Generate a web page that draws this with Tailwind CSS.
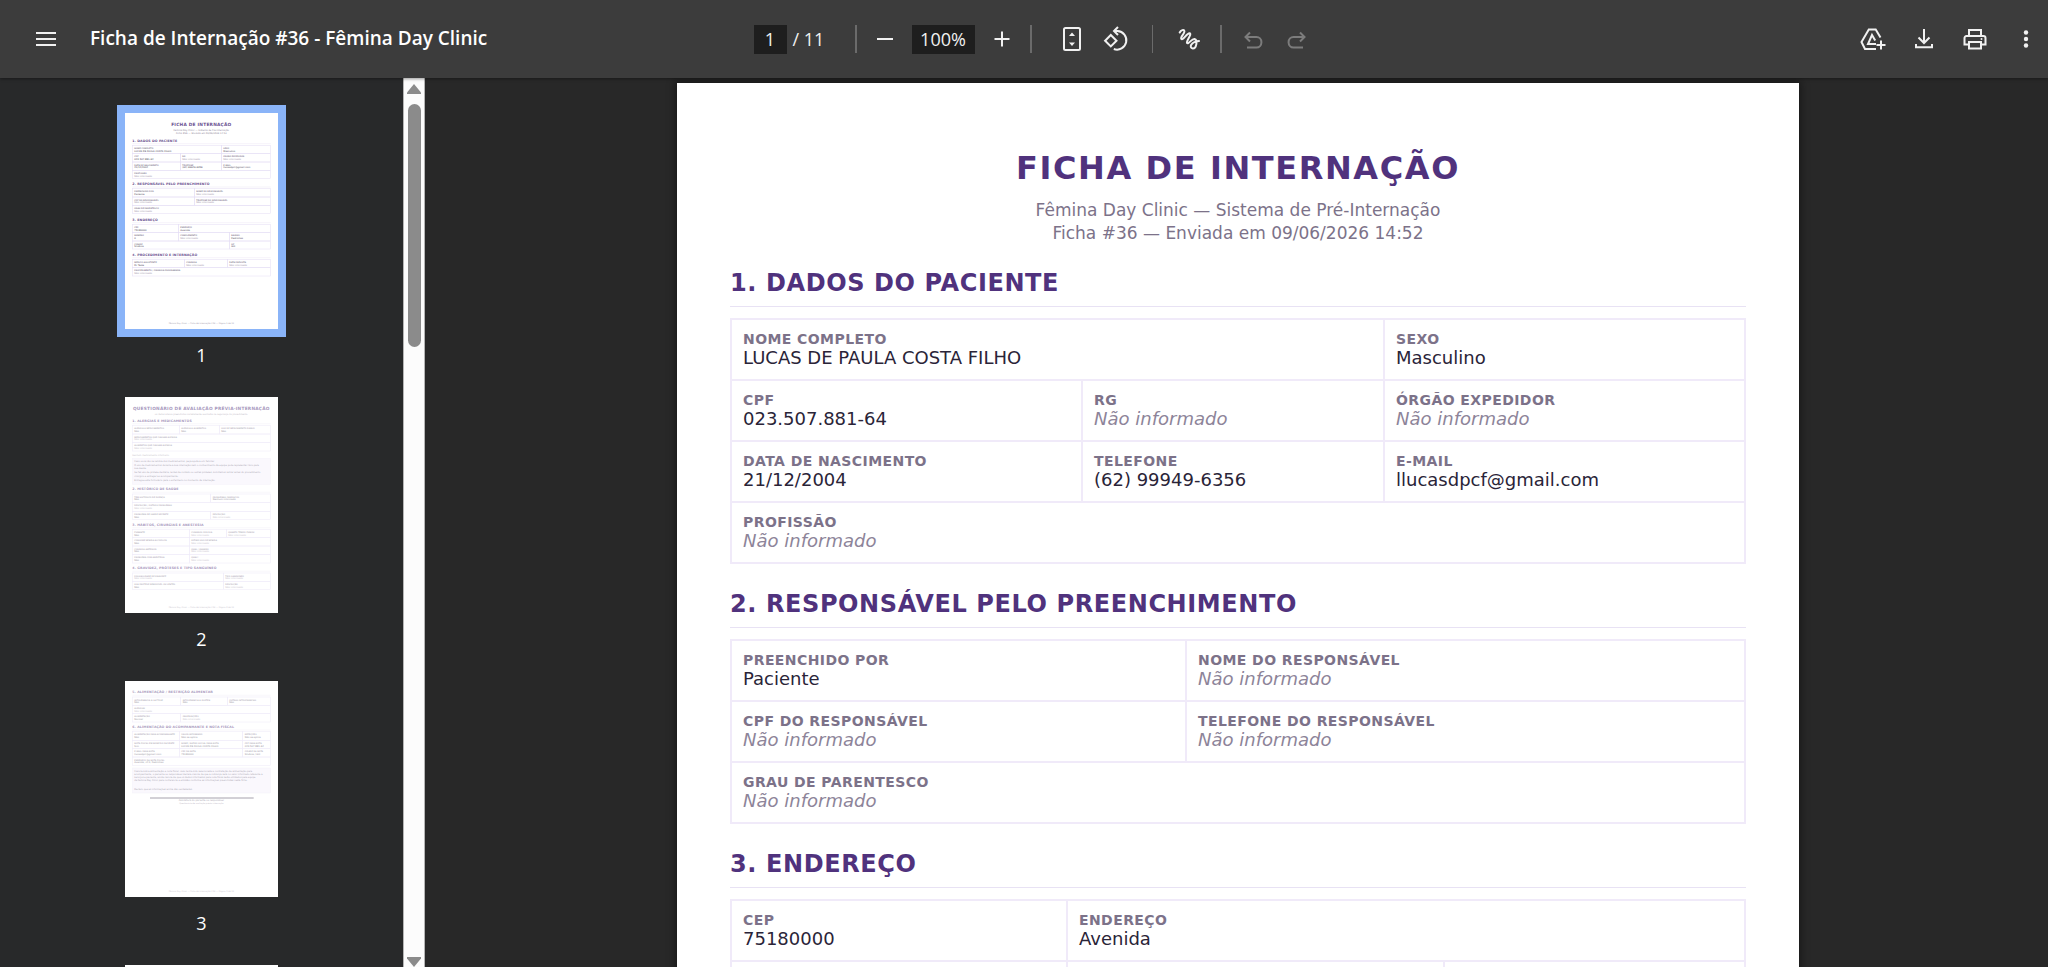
<!DOCTYPE html>
<html lang="pt-BR">
<head>
<meta charset="utf-8">
<meta name="viewport" content="width=device-width, initial-scale=1">
<title>Ficha de Internação #36 - Fêmina Day Clinic</title>
<script src="https://cdn.jsdelivr.net/npm/@tailwindcss/browser@4"></script>
</head>
<body class="flex h-screen flex-col overflow-hidden bg-[#282828] font-['Open_Sans','Noto_Sans',sans-serif] text-white">

<header class="relative z-10 flex h-[78px] shrink-0 items-center bg-[#3c3c3c] text-lg text-[#f1f1f1] shadow-[0_1px_3px_rgba(0,0,0,0.4)]">
  <div class="flex flex-1 items-center gap-[22px] pl-6">
    <button aria-label="Menu" class="flex h-11 w-11 items-center justify-center">
      <svg class="size-7" viewBox="0 0 28 28" stroke="currentColor" stroke-width="2"><path d="M4 8h20M4 14h20M4 20h20"/></svg>
    </button>
    <h1 class="whitespace-nowrap text-[19px] font-semibold text-white">Ficha de Internação #36 - Fêmina Day Clinic</h1>
  </div>

  <div class="flex shrink-0 items-center">
    <input aria-label="Página" value="1" class="h-[29px] w-[33px] bg-[#1e1e1e] text-center">
    <span class="ml-[6px] w-[56px] whitespace-nowrap">/ 11</span>
    <span class="mx-[6px] h-7 w-[2px] bg-[#6b6b6b]"></span>
    <button aria-label="Reduzir zoom" class="flex h-11 w-11 items-center justify-center">
      <svg class="size-7" viewBox="0 0 28 28" stroke="currentColor" stroke-width="2"><path d="M6 14h16"/></svg>
    </button>
    <input aria-label="Zoom" value="100%" class="mx-[5px] h-[29px] w-[63px] bg-[#1e1e1e] text-center">
    <button aria-label="Aumentar zoom" class="flex h-11 w-11 items-center justify-center">
      <svg class="size-7" viewBox="0 0 28 28" stroke="currentColor" stroke-width="2"><path d="M6.500 14h15M14 6.500v15"/></svg>
    </button>
    <span class="ml-[6px] mr-[18px] h-7 w-[2px] bg-[#6b6b6b]"></span>
    <button aria-label="Ajustar à página" class="flex h-11 w-11 items-center justify-center">
      <svg class="size-7" viewBox="0 0 28 28" fill="none" stroke="currentColor" stroke-width="2"><rect x="6" y="3" width="16" height="22" rx="1.500"/><path d="M14 7.500l3 3.500h-6zM14 21l3-3.500h-6z" fill="currentColor" stroke="none"/></svg>
    </button>
    <button aria-label="Girar no sentido anti-horário" class="flex h-11 w-11 items-center justify-center">
      <svg class="size-7" viewBox="0 0 28 28" fill="none" stroke="currentColor" stroke-width="2"><path d="M8.800 10l5.700 5.700-5.700 5.700-5.700-5.700zM11.500 6H15.500a9.300 9.300 0 1 1-3.700 18M16 2l-4 4 4 4"/></svg>
    </button>
    <span class="mx-[14px] h-7 w-px bg-[#6b6b6b]"></span>
    <button aria-label="Desenhar" class="flex h-11 w-11 items-center justify-center">
      <svg class="size-7" viewBox="0 0 28 28" fill="none" stroke="currentColor" stroke-width="2" stroke-linecap="round"><path d="M4.700 7.500C5.800 5.200 9.200 3.800 9.400 6.500 9.400 9 5 12 6.300 13.800 8 15.700 11.500 8.500 14.500 8.300 17.500 8.600 11 16 12 18 13.200 19.800 16.500 13.800 19.500 14 23 14.800 21.500 23.600 17.800 23.500 13.800 23 15.500 16.800 24 16"/></svg>
    </button>
    <span class="mx-[9px] h-7 w-[2px] bg-[#6b6b6b]"></span>
    <button aria-label="Desfazer" disabled class="flex h-11 w-11 items-center justify-center text-[#7c7c7c]">
      <svg class="size-7" viewBox="0 0 28 28" fill="none" stroke="currentColor" stroke-width="2"><path d="M6.500 12H17.500a4.700 5 0 0 1 0 10.500H8M11 7.500L6.500 12l4.500 4.500"/></svg>
    </button>
    <button aria-label="Refazer" disabled class="flex h-11 w-11 items-center justify-center text-[#7c7c7c]">
      <svg class="size-7" viewBox="0 0 28 28" fill="none" stroke="currentColor" stroke-width="2"><path d="M21.500 12H10.500a4.700 5 0 0 0 0 10.500H20M17 7.500L21.500 12l-4.500 4.500"/></svg>
    </button>
  </div>

  <div class="flex flex-1 items-center justify-end gap-[7px]">
    <button aria-label="Salvar no Google Drive" class="flex h-11 w-11 items-center justify-center">
      <svg class="size-7" viewBox="0 0 28 28" fill="none" stroke="currentColor" stroke-width="2"><path d="M21.500 12.500L16.700 4.500H9.800L2.500 17l3.500 7h11M17 19H9l4-9 3.200 5.500M22 15.500v9M17.500 20h9"/></svg>
    </button>
    <button aria-label="Fazer download" class="flex h-11 w-11 items-center justify-center">
      <svg class="size-7" viewBox="0 0 28 28" fill="none" stroke="currentColor" stroke-width="2"><path d="M14 4v14M8.500 12.500l5.500 5.500 5.500-5.500M6 19v3.200h16V19"/></svg>
    </button>
    <button aria-label="Imprimir" class="flex h-11 w-11 items-center justify-center">
      <svg class="size-7" viewBox="0 0 28 28" fill="none" stroke="currentColor" stroke-width="2"><path d="M8 11V5h12v6M8 19.500H3.500V13a2 2 0 0 1 2-2h17a2 2 0 0 1 2 2v6.500H20M8 17h12v6.500H8z"/><circle cx="20.500" cy="14" r="1" fill="currentColor" stroke="none"/></svg>
    </button>
    <button aria-label="Mais ações" class="flex h-11 w-11 items-center justify-center">
      <svg class="size-7" viewBox="0 0 28 28" fill="currentColor"><circle cx="14" cy="7.500" r="2.200"/><circle cx="14" cy="14" r="2.200"/><circle cx="14" cy="20.500" r="2.200"/></svg>
    </button>
  </div>
</header>

<div class="flex min-h-0 flex-1">
  <nav aria-label="Miniaturas" class="flex w-[403px] shrink-0 flex-col items-center gap-4 overflow-hidden bg-[#28292a] pt-[27px] text-lg">
    <a href="#pagina-1" class="flex shrink-0 flex-col items-center"><span class="bg-[#8ab4f8] p-2"><svg id="mini-1" class="block h-[216px] w-[153px] bg-white" viewBox="0 0 459 648"></svg></span><span class="leading-9">1</span></a>
    <a href="#pagina-2" class="flex shrink-0 flex-col items-center"><span class="p-2"><svg id="mini-2" class="block h-[216px] w-[153px] bg-white" viewBox="0 0 459 648"></svg></span><span class="leading-9">2</span></a>
    <a href="#pagina-3" class="flex shrink-0 flex-col items-center"><span class="p-2"><svg id="mini-3" class="block h-[216px] w-[153px] bg-white" viewBox="0 0 459 648"></svg></span><span class="leading-9">3</span></a>
    <a href="#pagina-4" aria-label="Página 4" class="flex shrink-0 flex-col items-center"><span class="p-2"><svg class="block h-[216px] w-[153px] bg-white" viewBox="0 0 459 648"></svg></span></a>
  </nav>

  <div aria-hidden="true" class="flex w-[22px] shrink-0 flex-col items-center justify-between border-x border-[#b5b5b5] bg-[#fcfcfc] pt-[6px]">
    <div class="flex flex-col items-center gap-[10px]">
      <svg class="h-[10px] w-[14px]" viewBox="0 0 14 10" fill="#8b8b8b"><path d="M7 0L14 8.500V10H0V8.500z"/></svg>
      <div class="h-[243px] w-[13px] rounded-full bg-[#8b8b8b]"></div>
    </div>
    <svg class="h-[10px] w-[14px]" viewBox="0 0 14 10" fill="#8b8b8b"><path d="M7 10L14 1.500V0H0V1.500z"/></svg>
  </div>

  <main class="min-w-0 flex-1 overflow-hidden pl-[3px] pt-[5px]">
    <article id="pagina-1" class="mx-auto w-[1122px] bg-white px-[53px] pb-24 pt-[65px] font-['DejaVu_Sans',sans-serif] text-[#2a2438] shadow-[0_0_8px_2px_rgba(0,0,0,0.4)]">
      <h2 class="text-center text-[32px] leading-[40px] font-bold tracking-[0.05em] text-[#50327d]">FICHA DE INTERNAÇÃO</h2>
      <p class="mt-[11px] text-center text-[17px] leading-[23px] text-[#7c7289]">Fêmina Day Clinic — Sistema de Pré-Internação<br>Ficha #36 — Enviada em 09/06/2026 14:52</p>

      <h3 class="mt-[23px] border-b border-[#e8e2f4] pb-2 text-2xl leading-[30px] font-bold tracking-wide text-[#50327d]">1. DADOS DO PACIENTE</h3>
      <table class="mt-[11px] w-full table-fixed border-collapse text-left text-lg leading-5 [&_b]:block [&_b]:text-sm [&_b]:leading-[18px] [&_b]:tracking-[0.03em] [&_b]:text-[#7c7289] [&_i]:text-[#8d8499] [&_td]:h-[61px] [&_td]:border-2 [&_td]:border-[#f0eaf9] [&_td]:px-[11px] [&_td]:pb-[2px]">
        <colgroup><col class="w-[351px]"><col class="w-[302px]"><col></colgroup>
        <tbody>
          <tr><td colspan="2"><b>NOME COMPLETO</b>LUCAS DE PAULA COSTA FILHO</td><td><b>SEXO</b>Masculino</td></tr>
          <tr><td><b>CPF</b>023.507.881-64</td><td><b>RG</b><i>Não informado</i></td><td><b>ÓRGÃO EXPEDIDOR</b><i>Não informado</i></td></tr>
          <tr><td><b>DATA DE NASCIMENTO</b>21/12/2004</td><td><b>TELEFONE</b>(62) 99949-6356</td><td><b>E-MAIL</b>llucasdpcf@gmail.com</td></tr>
          <tr><td colspan="3"><b>PROFISSÃO</b><i>Não informado</i></td></tr>
        </tbody>
      </table>

      <h3 class="mt-[25px] border-b border-[#e8e2f4] pb-2 text-2xl leading-[30px] font-bold tracking-wide text-[#50327d]">2. RESPONSÁVEL PELO PREENCHIMENTO</h3>
      <table class="mt-[11px] w-full table-fixed border-collapse text-left text-lg leading-5 [&_b]:block [&_b]:text-sm [&_b]:leading-[18px] [&_b]:tracking-[0.03em] [&_b]:text-[#7c7289] [&_i]:text-[#8d8499] [&_td]:h-[61px] [&_td]:border-2 [&_td]:border-[#f0eaf9] [&_td]:px-[11px] [&_td]:pb-[2px]">
        <colgroup><col class="w-[455px]"><col></colgroup>
        <tbody>
          <tr><td><b>PREENCHIDO POR</b>Paciente</td><td><b>NOME DO RESPONSÁVEL</b><i>Não informado</i></td></tr>
          <tr><td><b>CPF DO RESPONSÁVEL</b><i>Não informado</i></td><td><b>TELEFONE DO RESPONSÁVEL</b><i>Não informado</i></td></tr>
          <tr><td colspan="2"><b>GRAU DE PARENTESCO</b><i>Não informado</i></td></tr>
        </tbody>
      </table>

      <h3 class="mt-[25px] border-b border-[#e8e2f4] pb-2 text-2xl leading-[30px] font-bold tracking-wide text-[#50327d]">3. ENDEREÇO</h3>
      <table class="mt-[11px] w-full table-fixed border-collapse text-left text-lg leading-5 [&_b]:block [&_b]:text-sm [&_b]:leading-[18px] [&_b]:tracking-[0.03em] [&_b]:text-[#7c7289] [&_i]:text-[#8d8499] [&_td]:h-[61px] [&_td]:border-2 [&_td]:border-[#f0eaf9] [&_td]:px-[11px] [&_td]:pb-[2px]">
        <colgroup><col class="w-[336px]"><col class="w-[377px]"><col></colgroup>
        <tbody>
          <tr><td><b>CEP</b>75180000</td><td colspan="2"><b>ENDEREÇO</b>Avenida</td></tr>
          <tr><td></td><td></td><td></td></tr>
        </tbody>
      </table>
    </article>
  </main>
</div>

<script>
// Page miniatures: each page is a list of blocks drawn in a 459x648 space.
// table: [heading, top, [[height, [x, label, value], ...], ...]]
const NI = 'Não informado';
const pages = {
  'mini-1': { fade: 0.85, title: 'FICHA DE INTERNAÇÃO', subs: ['Fêmina Day Clinic — Sistema de Pré-Internação', 'Ficha #36 — Enviada em 09/06/2026 14:52'], foot: 'Fêmina Day Clinic — Ficha de Internação #36 — Página 1 de 11',
    tables: [
      ['1. DADOS DO PACIENTE', 97, [[25, [22, 'NOME COMPLETO', 'LUCAS DE PAULA COSTA FILHO'], [289, 'SEXO', 'Masculino']], [25, [22, 'CPF', '023.507.881-64'], [166, 'RG', NI], [289, 'ÓRGÃO EXPEDIDOR', NI]], [25, [22, 'DATA DE NASCIMENTO', '21/12/2004'], [166, 'TELEFONE', '(62) 99949-6356'], [289, 'E-MAIL', 'llucasdpcf@gmail.com']], [25, [22, 'PROFISSÃO', NI]]]],
      ['2. RESPONSÁVEL PELO PREENCHIMENTO', 227, [[25, [22, 'PREENCHIDO POR', 'Paciente'], [208, 'NOME DO RESPONSÁVEL', NI]], [25, [22, 'CPF DO RESPONSÁVEL', NI], [208, 'TELEFONE DO RESPONSÁVEL', NI]], [25, [22, 'GRAU DE PARENTESCO', NI]]]],
      ['3. ENDEREÇO', 334, [[25, [22, 'CEP', '75180000'], [160, 'ENDEREÇO', 'Avenida']], [25, [22, 'NÚMERO', '0'], [160, 'COMPLEMENTO', NI], [313, 'BAIRRO', 'Pedrinhas']], [24, [22, 'CIDADE', 'Silvânia'], [313, 'UF', 'GO']]]],
      ['4. PROCEDIMENTO E INTERNAÇÃO', 439, [[25, [22, 'MÉDICO ASSISTENTE', 'Dr Teste'], [178, 'CIRURGIA', NI], [307, 'DATA PREVISTA', NI]], [25, [22, 'PROCEDIMENTO / CIRURGIA PROGRAMADA', NI]]]]
    ] },
  'mini-2': { fade: 0.5, title: 'QUESTIONÁRIO DE AVALIAÇÃO PRÉVIA-INTERNAÇÃO', subs: ['Os dados abaixo preenchidos corretamente auxiliarão na segurança do procedimento.'], foot: 'Fêmina Day Clinic — Ficha de Internação #36 — Página 2 de 11',
    tables: [
      ['1. ALERGIAS E MEDICAMENTOS', 85, [[26, [22, 'ALERGIA A MEDICAMENTOS', 'Não'], [163, 'ALERGIA A ALIMENTOS', 'Não'], [283, 'USO DE MEDICAMENTO DIÁRIO', 'Não']], [25, [22, 'MEDICAMENTOS QUE CAUSAM ALERGIA', NI]], [26, [22, 'ALIMENTOS QUE CAUSAM ALERGIA', NI]]]],
      ['2. HISTÓRICO DE SAÚDE', 291, [[26, [22, 'TEM HISTÓRICO DE DOENÇA', 'Não'], [257, 'PROBLEMAS CARDÍACOS', 'Nenhum informado']], [26, [22, 'DESCRIÇÃO / OUTROS PROBLEMAS', NI]], [25, [22, 'PROBLEMA DE SAÚDE RECENTE', 'Não'], [257, 'DESCRIÇÃO', NI]]]],
      ['3. HÁBITOS, CIRURGIAS E ANESTESIA', 397, [[25, [22, 'FUMANTE', 'Não'], [193, 'CIGARROS POR DIA', NI], [304, 'QUANTO TEMPO FUMOU', NI]], [25, [22, 'CONSOME BEBIDA ALCOÓLICA', 'Não'], [193, 'ÚLTIMO USO DE BEBIDA', NI]], [26, [22, 'CIRURGIA ANTERIOR', 'Não'], [193, 'QUAL / QUANDO', NI]], [25, [22, 'PROBLEMA COM ANESTESIA', 'Não'], [193, 'QUAL?', NI]]]],
      ['4. GRAVIDEZ, PRÓTESES E TIPO SANGUÍNEO', 528, [[25, [22, 'POSSIBILIDADE DE GRAVIDEZ', NI], [295, 'TIPO SANGUÍNEO', NI]], [25, [22, 'USA PRÓTESE REMOVÍVEL OU LENTES', 'Não'], [295, 'DESCRIÇÃO', NI]]]]
    ],
    note: [176, 'Nenhum medicamento informado.'],
    box: [184, 78, [[196, 'Caso você não se lembre dos medicamentos, peça ajuda a um familiar.'], [208, 'O uso de medicamentos durante a sua internação sem o conhecimento da equipe pode representar risco para'], [217, 'sua saúde.'], [229, 'Se faz uso de prótese dentária, lentes de contato ou outras próteses, solicitamos retirar antes do procedimento'], [239, 'cirúrgico e entregar ao acompanhante.'], [251, 'Entregue este formulário para o enfermeiro no momento da internação.']]] },
  'mini-3': { fade: 0.5, subs: [], foot: 'Fêmina Day Clinic — Ficha de Internação #36 — Página 3 de 11',
    tables: [
      ['5. ALIMENTAÇÃO / RESTRIÇÃO ALIMENTAR', 48, [[25, [22, 'INTOLERÂNCIA À LACTOSE', 'Não'], [167, 'INTOLERÂNCIA A GLÚTEN', 'Não'], [307, 'OUTRAS INTOLERÂNCIAS', 'Não']], [25, [22, 'ALERGIAS', NI]], [25, [22, 'ALIMENTAÇÃO', 'Normal'], [167, 'OBSERVAÇÕES', NI]]]],
      ['6. ALIMENTAÇÃO DO ACOMPANHANTE E NOTA FISCAL', 152, [[26, [22, 'ALIMENTAÇÃO PARA ACOMPANHANTE', 'Não'], [163, 'VALOR INFORMADO', 'Não se aplica'], [353, 'REFEIÇÕES', 'Não se aplica']], [25, [22, 'NOTA FISCAL EM NOME DO PACIENTE', 'Sim'], [163, 'NOME / RAZÃO SOCIAL PARA NOTA', 'LUCAS DE PAULA COSTA FILHO'], [353, 'CPF PARA NOTA', '023.507.881-64']], [25, [22, 'E-MAIL PARA NOTA', 'llucasdpcf@gmail.com'], [163, 'CEP DA NOTA', '75180000'], [353, 'CIDADE DA NOTA', 'Silvânia / GO']], [25, [22, 'ENDEREÇO DA NOTA FISCAL', 'Avenida, nº 0, Pedrinhas']]]]
    ],
    box: [261, 75, [[273, 'Ciência sobre alimentação e nota fiscal: caso tenha sido selecionada a contratação de alimentação para'], [283, 'acompanhante, o paciente ou responsável declara ciência de que a cobrança será no valor informado referente a'], [292, 'serviços e paciente, ainda ciência de que os dados informados para nota fiscal serão utilizados pela equipe'], [300, 'da Fêmina Day Clinic para conferência e emissão conforme as informações preenchidas nesta ficha.'], [327, 'Declaro que as informações acima são verdadeiras.']]],
    sign: true }
};

function text(x, y, size, color, s, extra = '') {
  return `<text x="${x}" y="${y}" font-size="${size}" fill="${color}" ${extra}>${s}</text>`;
}
for (const [id, p] of Object.entries(pages)) {
  const mid = 'text-anchor="middle"', bold = 'font-weight="700"';
  let out = `<g font-family="DejaVu Sans, sans-serif" opacity="${p.fade}">`;
  if (p.title) out += text(229, 39, 13, '#50327d', p.title, `${mid} ${bold} letter-spacing="0.7"`);
  p.subs.forEach((s, i) => out += text(229, 54 + i * 10, p.title.length > 30 ? 6.5 : 7, '#7c7289', s, mid));
  for (const [head, top, rows] of p.tables) {
    out += text(22, top - 11, 9.8, '#50327d', head, `${bold} letter-spacing="0.3"`);
    out += `<path d="M22 ${top - 5}H437" stroke="#e0d8f0" stroke-width="1"/>`;
    let y = top;
    for (const [h, ...cells] of rows) {
      cells.forEach(([x, label, value], i) => {
        const right = cells[i + 1] ? cells[i + 1][0] : 437;
        out += `<rect x="${x}" y="${y}" width="${right - x}" height="${h}" fill="none" stroke="#e0d8f4" stroke-width="1.5"/>`;
        out += text(x + 6, y + 11, 5.8, '#7c7289', label, bold);
        out += text(x + 6, y + 19, 7.2, value === NI ? '#8d8499' : '#2a2438', value);
      });
      y += h;
    }
  }
  if (p.note) out += text(22, p.note[0], 6.5, '#8d8499', p.note[1]);
  if (p.box) {
    out += `<rect x="22" y="${p.box[0]}" width="415" height="${p.box[1]}" fill="#f6f2fc" stroke="#e6dff4"/>`;
    p.box[2].forEach(([y, s]) => out += text(28, y, 6.8, '#50485f', s));
  }
  if (p.sign) {
    out += '<path d="M75 351H386" stroke="#50485f" stroke-width="3"/>';
    out += text(229, 360, 7, '#50485f', 'Assinatura do paciente ou responsável', mid);
    out += text(229, 370, 6, '#7c7289', 'Questionário de avaliação prévia-internação', mid);
  }
  out += text(229, 632, 6.2, '#8d8499', p.foot, mid) + '</g>';
  document.getElementById(id).innerHTML = out;
}
</script>
</body>
</html>
